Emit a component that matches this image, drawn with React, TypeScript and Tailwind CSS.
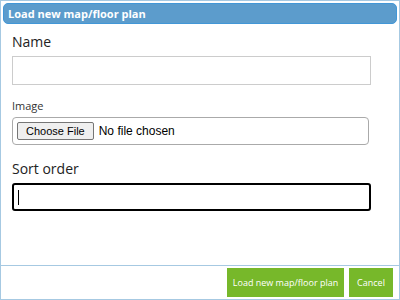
const font = { fontFamily: '"Open Sans", "Noto Sans", sans-serif' };
const arial = { fontFamily: '"Liberation Sans", Arial, sans-serif' };

export default function App() {
  return (
    <div
      className="relative flex h-[300px] w-[400px] flex-col border border-[#a6c9e2] bg-white p-[2px]"
      style={font}
    >
      {/* title bar */}
      <div className="flex h-[21px] shrink-0 items-center rounded-[5px] border border-[#4297d7] bg-[#5c9ccc] px-[4px]">
        <span className="text-[11px] font-bold leading-none text-white">Load new map/floor plan</span>
      </div>

      {/* body */}
      <div className="flex flex-1 flex-col px-[9px] pt-[7px]">
        <label className="text-[14px] leading-[22px] text-[#222]">Name</label>
        <div className="mt-[3px] h-[29px] w-[359px] border border-[#cccccc] bg-white" />

        <label className="mt-[12px] text-[11px] leading-[18px] text-[#333]">Image</label>
        <div className="mt-[2px] flex h-[28px] w-[357px] items-center gap-[5px] rounded-[4px] border border-[#aaaaaa] px-[4px]">
          <span
            className="flex h-[18px] items-center rounded-[2px] border border-[#767676] bg-[#efefef] px-[8px] text-[11px] text-black"
            style={arial}
          >
            Choose File
          </span>
          <span className="text-[12px] text-black" style={arial}>
            No file chosen
          </span>
        </div>

        <label className="mt-[13px] text-[14px] leading-[22px] text-[#222]">Sort order</label>
        <div className="mt-[3px] flex h-[28px] w-[359px] items-center rounded-[3px] border-2 border-black bg-white px-[4px]">
          <span className="h-[15px] w-px bg-black" />
        </div>
      </div>

      {/* footer */}
      <div className="mx-[-2px] flex h-[32px] shrink-0 items-end justify-end gap-[5px] border-t border-[#a6c9e2] px-[6px]">
        <button className="h-[29px] w-[117px] whitespace-nowrap bg-[#77b82a] text-[9px] text-white">
          Load new map/floor plan
        </button>
        <button className="h-[29px] w-[44px] whitespace-nowrap bg-[#77b82a] text-[9px] text-white">Cancel</button>
      </div>
    </div>
  );
}
